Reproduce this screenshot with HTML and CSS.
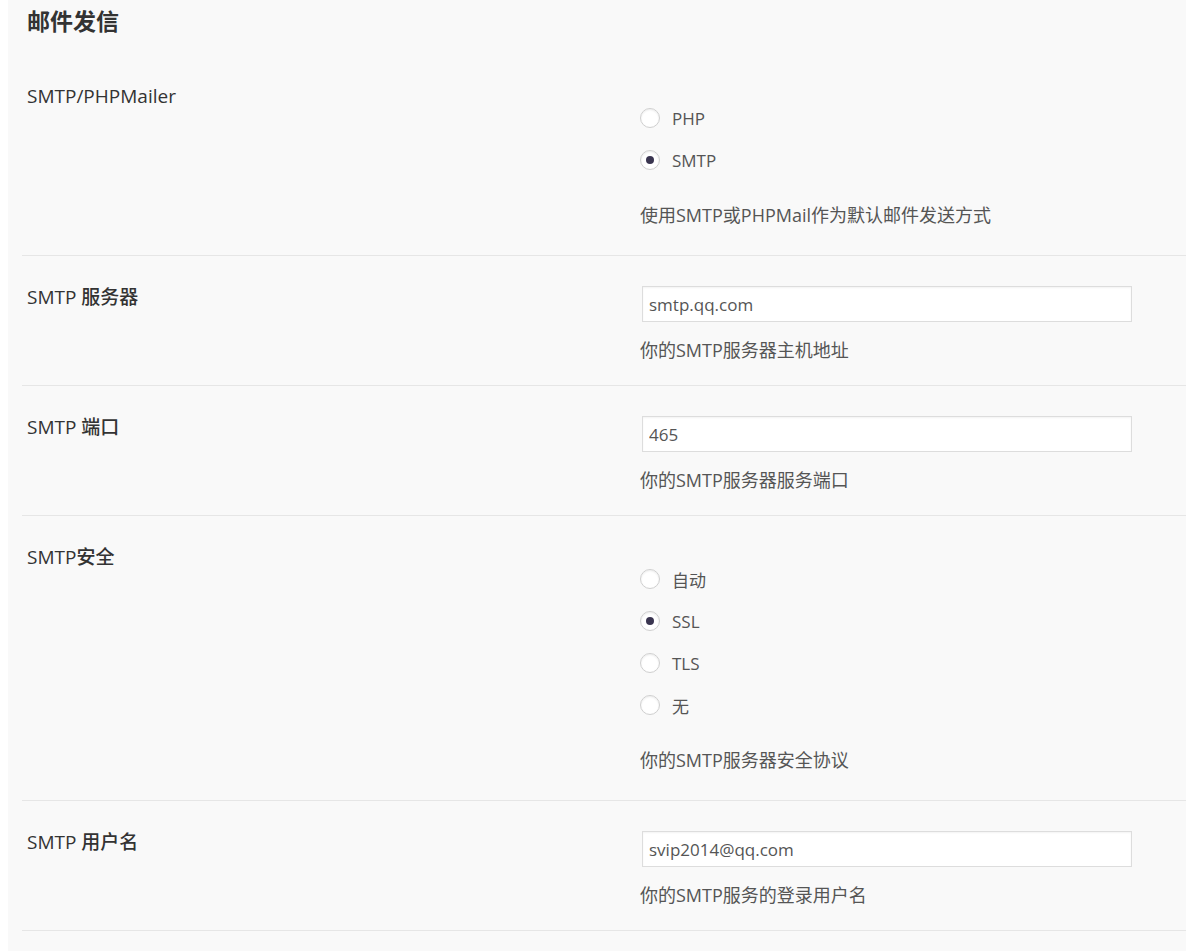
FILE: index.html
```html
<!DOCTYPE html>
<html lang="zh-CN">
<head>
    <meta charset="UTF-8">
    <title>邮件发信</title>
    <link rel="stylesheet" href="styles.css">
</head>
<body>
    <div class="wrap">
        <h2 class="section-title">邮件发信</h2>

        <!-- 发信方式 -->
        <div class="form-row">
            <div class="form-label">SMTP/PHPMailer</div>
            <div class="form-field radio-field">
                <label class="radio-line"><input type="radio" name="mailer" value="php"> PHP</label>
                <label class="radio-line"><input type="radio" name="mailer" value="smtp" checked> SMTP</label>
                <p class="desc">使用SMTP或PHPMail作为默认邮件发送方式</p>
            </div>
        </div>

        <div class="form-row">
            <div class="form-label">SMTP 服务器</div>
            <div class="form-field">
                <input type="text" class="text-input" value="smtp.qq.com">
                <p class="desc">你的SMTP服务器主机地址</p>
            </div>
        </div>

        <div class="form-row">
            <div class="form-label">SMTP 端口</div>
            <div class="form-field">
                <input type="text" class="text-input" value="465">
                <p class="desc">你的SMTP服务器服务端口</p>
            </div>
        </div>

        <div class="form-row">
            <div class="form-label">SMTP安全</div>
            <div class="form-field radio-field">
                <label class="radio-line"><input type="radio" name="secure" value="auto"> 自动</label>
                <label class="radio-line"><input type="radio" name="secure" value="ssl" checked> SSL</label>
                <label class="radio-line"><input type="radio" name="secure" value="tls"> TLS</label>
                <label class="radio-line"><input type="radio" name="secure" value="none"> 无</label>
                <p class="desc">你的SMTP服务器安全协议</p>
            </div>
        </div>

        <div class="form-row">
            <div class="form-label">SMTP 用户名</div>
            <div class="form-field">
                <input type="text" class="text-input" value="svip2014@qq.com">
                <p class="desc">你的SMTP服务的登录用户名</p>
            </div>
        </div>
    </div>
</body>
</html>
```

FILE: styles.css
```css
body {
    margin: 0;
    padding: 0 0 0 8px;
    background-color: #fff;
    font-family: "Open Sans", "Noto Sans CJK SC", sans-serif;
    color: #444;
}

.wrap {
    background-color: #f9f9f9;
    min-height: 951px;
    padding-left: 14px;
}

.section-title {
    margin: 0;
    padding: 6px 0 0 5px;
    height: 55px;
    box-sizing: border-box;
    font-size: 23px;
    line-height: 30px;
    font-weight: 700;
    color: #333;
}

.form-row {
    display: grid;
    grid-template-columns: 618px 1fr;
    border-bottom: 1px solid #e6e6e6;
}

.form-label {
    padding: 29px 0 0 5px;
    font-size: 19px;
    line-height: 24px;
    font-weight: 500;
    color: #333;
}

.form-field {
    padding: 30px 0 23px 0;
}

.radio-field {
    padding-top: 42px;
    padding-bottom: 28px;
}

.radio-line {
    display: flex;
    align-items: center;
    height: 42px;
    font-size: 17px;
    color: #555;
}

.radio-line input {
    appearance: none;
    -webkit-appearance: none;
    width: 20px;
    height: 20px;
    margin: 0 12px 0 0;
    border: 1px solid #cfcfcf;
    border-radius: 50%;
    background-color: #fff;
    box-shadow: inset 0 1px 2px rgba(0, 0, 0, 0.08);
    display: flex;
    align-items: center;
    justify-content: center;
}

.radio-line input:checked::before {
    content: "";
    width: 8px;
    height: 8px;
    border-radius: 50%;
    background-color: #3a3550;
}

.text-input {
    display: block;
    width: 490px;
    height: 36px;
    margin: 0 0 0 2px;
    padding: 0 6px;
    box-sizing: border-box;
    border: 1px solid #ddd;
    background-color: #fff;
    box-shadow: inset 0 1px 2px rgba(0, 0, 0, 0.05);
    font-family: "Open Sans", "Noto Sans CJK SC", sans-serif;
    font-size: 17px;
    color: #555;
    outline: none;
}

.desc {
    margin: 16px 0 0 0;
    font-size: 18px;
    line-height: 24px;
    color: #555;
}

.radio-field .desc {
    margin-top: 22px;
}
```
